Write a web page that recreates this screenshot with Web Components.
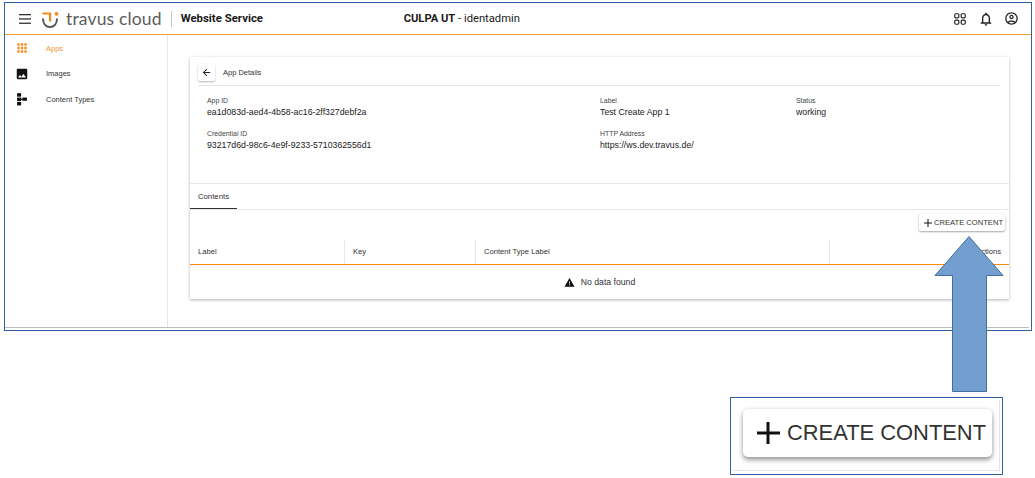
<!DOCTYPE html>
<html>
<head>
<meta charset="utf-8">
<title>App Details</title>
<style>
  html, body { margin: 0; padding: 0; background: #fff; }
  body { width: 1035px; height: 478px; overflow: hidden; position: relative; font-family: "Liberation Sans", Arial, sans-serif; }
</style>
</head>
<body>
<app-frame>
  <top-bar slot="top"></top-bar>
  <side-nav slot="side">
    <nav-item icon="apps" active>Apps</nav-item>
    <nav-item icon="image">Images</nav-item>
    <nav-item icon="tree">Content Types</nav-item>
  </side-nav>
  <detail-card>
    <field-item style="grid-column:1;grid-row:1" label="App ID">ea1d083d-aed4-4b58-ac16-2ff327debf2a</field-item>
    <field-item style="grid-column:2;grid-row:1" label="Label">Test Create App 1</field-item>
    <field-item style="grid-column:3;grid-row:1" label="Status">working</field-item>
    <field-item style="grid-column:1;grid-row:2" label="Credential ID">93217d6d-98c6-4e9f-9233-5710362556d1</field-item>
    <field-item style="grid-column:2;grid-row:2" label="HTTP Address">https://ws.dev.travus.de/</field-item>
  </detail-card>
</app-frame>
<arrow-note></arrow-note>
<zoom-note></zoom-note>

<script>
  const ICONS = {
    apps: '<path d="M4 8h4V4H4v4zm6 12h4v-4h-4v4zm-6 0h4v-4H4v4zm0-6h4v-4H4v4zm6 0h4v-4h-4v4zm6-10v4h4V4h-4zm-6 4h4V4h-4v4zm6 6h4v-4h-4v4zm0 6h4v-4h-4v4z"/>',
    image: '<path d="M21 19V5c0-1.1-.9-2-2-2H5c-1.1 0-2 .9-2 2v14c0 1.1.9 2 2 2h14c1.1 0 2-.9 2-2zM8.5 13.5l2.5 3.01L14.5 12l4.500 6H5l3.5-4.5z"/>',
    tree: '<rect x="3.5" y="2" width="7" height="6"/><rect x="3.5" y="9.5" width="7" height="6"/><rect x="3.5" y="17" width="7" height="6"/><rect x="10" y="11.5" width="3" height="2"/><rect x="12.5" y="9.5" width="8" height="5.5"/>'
  };

  class AppFrame extends HTMLElement {
    connectedCallback() {
      this.attachShadow({ mode: 'open' });
      this.shadowRoot.innerHTML = `
        <style>
          :host { display: block; box-sizing: border-box; width: 1028px; height: 329px; margin: 2px 0 0 4px; border: 1px solid #2f62a0; background: #fff; }
          .inner { display: flex; flex-direction: column; box-sizing: border-box; height: 325px; border-bottom: 1px solid #bdbdbd; margin-right: 2px; }
          .body { flex: 1; display: flex; min-height: 0; }
          main { flex: 1; padding: 22px 20px 0 22px; min-width: 0; }
        </style>
        <div class="inner">
          <slot name="top"></slot>
          <div class="body">
            <slot name="side"></slot>
            <main><slot></slot></main>
          </div>
        </div>`;
    }
  }

  class TopBar extends HTMLElement {
    connectedCallback() {
      this.attachShadow({ mode: 'open' });
      this.shadowRoot.innerHTML = `
        <style>
          :host { display: flex; align-items: center; box-sizing: border-box; height: 32px; margin-right: -2px; border-bottom: 1px solid #f5a03a; color: #1a1a1a; }
          svg { display: block; flex: none; }
          .burger { margin-left: 14px; }
          .logo { margin-left: 10px; }
          .brand { margin-left: 7px; font: 400 17.5px/1 "Lato", sans-serif; color: #5c5c5c; letter-spacing: .15px; white-space: nowrap; }
          .sep { width: 1px; height: 16px; background: #c4c4c4; margin: 0 9px 0 9px; }
          .service { font: 700 11.4px/1 "Roboto", sans-serif; width: 223px; white-space: nowrap; }
          .tenant { flex: 1; font: 400 11.2px/1 "Roboto", sans-serif; white-space: nowrap; }
          .tenant b { font-weight: 700; }
          .icons { display: flex; align-items: center; gap: 11px; margin-right: 12px; }
          .bell { margin-right: -1px; }
        </style>
        <svg class="burger" width="12" height="10" viewBox="0 0 12 10" fill="#333"><rect y="0" width="12" height="1.3"/><rect y="4.3" width="12" height="1.3"/><rect y="8.6" width="12" height="1.3"/></svg>
        <svg class="logo" width="18" height="18" viewBox="0 0 18 18" fill="none">
          <path d="M2 8.5C2 14 5 17 9 17s7-3 7-8.5" stroke="#555" stroke-width="2"/>
          <path d="M1.5 2.5H10.2V11.5H8V4.5H1.5z" fill="#f08a1c"/>
          <circle cx="15.5" cy="3.8" r="1.9" fill="#f08a1c"/>
        </svg>
        <span class="brand">travus cloud</span>
        <span class="sep"></span>
        <span class="service">Website Service</span>
        <span class="tenant"><b>CULPA UT</b> - identadmin</span>
        <div class="icons">
          <svg width="14" height="14" viewBox="0 0 24 24" fill="none" stroke="#222" stroke-width="2"><rect x="3" y="3" width="7" height="7" rx="2"/><rect x="14" y="3" width="7" height="7" rx="2"/><rect x="3" y="14" width="7" height="7" rx="2"/><rect x="14" y="14" width="7" height="7" rx="2"/></svg>
          <svg class="bell" width="16" height="16" viewBox="0 0 24 24" fill="#222"><path d="M12 22c1.1 0 2-.9 2-2h-4c0 1.1.9 2 2 2zm6-6v-5c0-3.07-1.63-5.64-4.5-6.32V4c0-.83-.67-1.5-1.5-1.5s-1.5.67-1.5 1.5v.68C7.64 5.36 6 7.92 6 11v5l-2 2v1h16v-1l-2-2zm-2 1H8v-6c0-2.48 1.51-4.5 4-4.5s4 2.02 4 4.5v6z"/></svg>
          <svg width="15" height="15" viewBox="0 0 24 24" fill="#222"><path d="M12 2C6.48 2 2 6.48 2 12s4.48 10 10 10 10-4.48 10-10S17.52 2 12 2zM7.35 18.5C8.66 17.56 10.26 17 12 17s3.34.56 4.65 1.5C15.34 19.44 13.74 20 12 20s-3.34-.56-4.65-1.5zm10.79-1.38C16.45 15.8 14.32 15 12 15s-4.45.8-6.14 2.12C4.7 15.73 4 13.95 4 12c0-4.42 3.58-8 8-8s8 3.58 8 8c0 1.95-.7 3.73-1.86 5.12zM12 6c-1.93 0-3.5 1.57-3.5 3.5S10.07 13 12 13s3.5-1.57 3.5-3.5S13.93 6 12 6zm0 5c-.83 0-1.5-.67-1.5-1.5S11.17 8 12 8s1.5.67 1.5 1.5S12.83 11 12 11z"/></svg>
        </div>`;
    }
  }

  class SideNav extends HTMLElement {
    connectedCallback() {
      this.attachShadow({ mode: 'open' });
      this.shadowRoot.innerHTML = `
        <style>
          :host { display: flex; flex-direction: column; box-sizing: border-box; width: 163px; flex: none; padding-top: .5px; border-right: 1px solid #e6e6e6; }
        </style>
        <slot></slot>`;
    }
  }

  class NavItem extends HTMLElement {
    connectedCallback() {
      const active = this.hasAttribute('active');
      this.attachShadow({ mode: 'open' });
      this.shadowRoot.innerHTML = `
        <style>
          :host { display: flex; align-items: center; height: 25.5px; padding-left: 10px; font-size: 7.5px; line-height: 1; color: ${active ? '#f0962e' : '#333'}; }
          svg { flex: none; margin-right: 17px; }
        </style>
        <svg width="14" height="14" viewBox="0 0 24 24" fill="${active ? '#f08a1c' : '#111'}">${ICONS[this.getAttribute('icon')]}</svg>
        <slot></slot>`;
    }
  }

  class FieldItem extends HTMLElement {
    connectedCallback() {
      this.attachShadow({ mode: 'open' });
      this.shadowRoot.innerHTML = `
        <style>
          :host { display: block; }
          .k { font-size: 6.9px; line-height: 9px; color: #444; }
          .v { font-size: 8.75px; line-height: 11px; margin-top: 2px; color: #222; white-space: nowrap; }
        </style>
        <div class="k">${this.getAttribute('label')}</div>
        <div class="v"><slot></slot></div>`;
    }
  }

  class CreateButton extends HTMLElement {
    connectedCallback() {
      this.attachShadow({ mode: 'open' });
      this.shadowRoot.innerHTML = `
        <style>
          :host { display: inline-flex; align-items: center; box-sizing: border-box; width: 86px; height: 17px; padding-left: 5px; border-radius: 2px; background: #fff; font-size: 7.6px; color: #333; white-space: nowrap; box-shadow: 0 1px 2px rgba(0,0,0,.32), 0 0 2px rgba(0,0,0,.1); }
          svg { flex: none; margin-right: 2px; }
        </style>
        <svg width="8" height="8" viewBox="0 0 8 8"><path d="M3.5 0h1v3.5H8v1H4.5V8h-1V4.5H0v-1h3.5z" fill="#111"/></svg>
        CREATE CONTENT`;
    }
  }

  class DetailCard extends HTMLElement {
    connectedCallback() {
      this.attachShadow({ mode: 'open' });
      this.shadowRoot.innerHTML = `
        <style>
          :host { display: block; box-sizing: border-box; height: 242px; background: #fff; box-shadow: 0 1px 3px rgba(0,0,0,.3); font-size: 9px; color: #333; }
          .head { display: flex; align-items: center; gap: 8px; height: 29px; padding-top: 3px; margin: 0 9px 0 8px; border-bottom: 1px solid #e6e6e6; box-sizing: border-box; font-size: 7.5px; }
          .back { width: 17px; height: 17px; display: flex; align-items: center; justify-content: center; border-radius: 2px; box-shadow: 0 1px 2px rgba(0,0,0,.3); }
          .fields { display: grid; grid-template-columns: 393px 196px 1fr; grid-auto-rows: 33px; padding: 10px 0 0 17px; height: 97px; box-sizing: border-box; }
          .tabs { height: 27px; box-sizing: border-box; border-top: 1px solid #e6e6e6; border-bottom: 1px solid #e6e6e6; display: flex; }
          .tab { width: 47px; display: flex; align-items: center; justify-content: center; box-sizing: border-box; border-bottom: 1px solid #333; font-size: 7.8px; }
          .tools { display: flex; justify-content: flex-end; padding: 4px 4px 0 0; height: 30px; box-sizing: border-box; }
          .row { display: grid; grid-template-columns: 155px 131px 354px 1fr; height: 24px; font-size: 7.6px; }
          .row div { display: flex; align-items: center; padding: 0 8px 2px; border-right: 1px solid #e6e6e6; }
          .row div:last-child { border-right: 0; justify-content: flex-end; }
          .rule { height: 1px; background: #f58a0a; }
          .empty { display: flex; align-items: center; justify-content: center; gap: 6px; height: 34px; font-size: 8.7px; }
        </style>
        <div class="head">
          <span class="back"><svg width="11" height="11" viewBox="0 0 24 24" fill="#222"><path d="M20 11H7.83l5.59-5.59L12 4l-8 8 8 8 1.41-1.41L7.83 13H20v-2z"/></svg></span>
          <span>App Details</span>
        </div>
        <div class="fields"><slot></slot></div>
        <div class="tabs"><div class="tab">Contents</div></div>
        <div class="tools"><create-button></create-button></div>
        <div class="row"><div>Label</div><div>Key</div><div>Content Type Label</div><div>Actions</div></div>
        <div class="rule"></div>
        <div class="empty">
          <svg width="11" height="11" viewBox="0 0 24 24" fill="#111"><path d="M1 21h22L12 2 1 21zm12-3h-2v-2h2v2zm0-4h-2v-4h2v4z"/></svg>
          <span>No data found</span>
        </div>`;
    }
  }

  // pointer from the zoomed detail up to the real button
  class ArrowNote extends HTMLElement {
    connectedCallback() {
      this.attachShadow({ mode: 'open' });
      this.shadowRoot.innerHTML = `
        <style>
          :host { position: absolute; left: 930px; top: 232px; width: 80px; height: 165px; display: block; }
          svg { display: block; }
        </style>
        <svg width="80" height="165" viewBox="930 232 80 165">
          <path d="M969 236.5L1003 275.5H986.5V391.5H952.5V275.5H935z" fill="#729fcf" stroke="#41719c" stroke-width="1"/>
        </svg>`;
    }
  }

  class ZoomNote extends HTMLElement {
    connectedCallback() {
      this.attachShadow({ mode: 'open' });
      this.shadowRoot.innerHTML = `
        <style>
          :host { position: absolute; left: 730px; top: 397px; width: 273px; height: 78px; box-sizing: border-box; display: flex; border: 1px solid #2f62a0; background: #fff; padding: 2px 2px 3px 2px; }
          .shot { flex: 1; border-right: 1px solid #e4e4e4; border-bottom: 1px solid #e4e4e4; padding: 9px 0 0 10px; }
          .btn { display: flex; align-items: center; box-sizing: border-box; width: 249px; height: 48px; border-radius: 5px; background: #fff; padding-left: 13px; font-size: 21.9px; color: #333; white-space: nowrap; box-shadow: 0 3px 5px rgba(0,0,0,.38), 0 0 4px rgba(0,0,0,.1); }
          svg { flex: none; margin-right: 7px; }
        </style>
        <div class="shot"><div class="btn">
          <svg width="24" height="24" viewBox="0 0 24 24"><path d="M10.5 1h3v9.5H24v3H13.5V23h-3V13.5H1v-3h9.500z" fill="#111"/></svg>
          CREATE CONTENT
        </div></div>`;
    }
  }

  customElements.define('app-frame', AppFrame);
  customElements.define('top-bar', TopBar);
  customElements.define('side-nav', SideNav);
  customElements.define('nav-item', NavItem);
  customElements.define('field-item', FieldItem);
  customElements.define('create-button', CreateButton);
  customElements.define('detail-card', DetailCard);
  customElements.define('arrow-note', ArrowNote);
  customElements.define('zoom-note', ZoomNote);
</script>
</body>
</html>
